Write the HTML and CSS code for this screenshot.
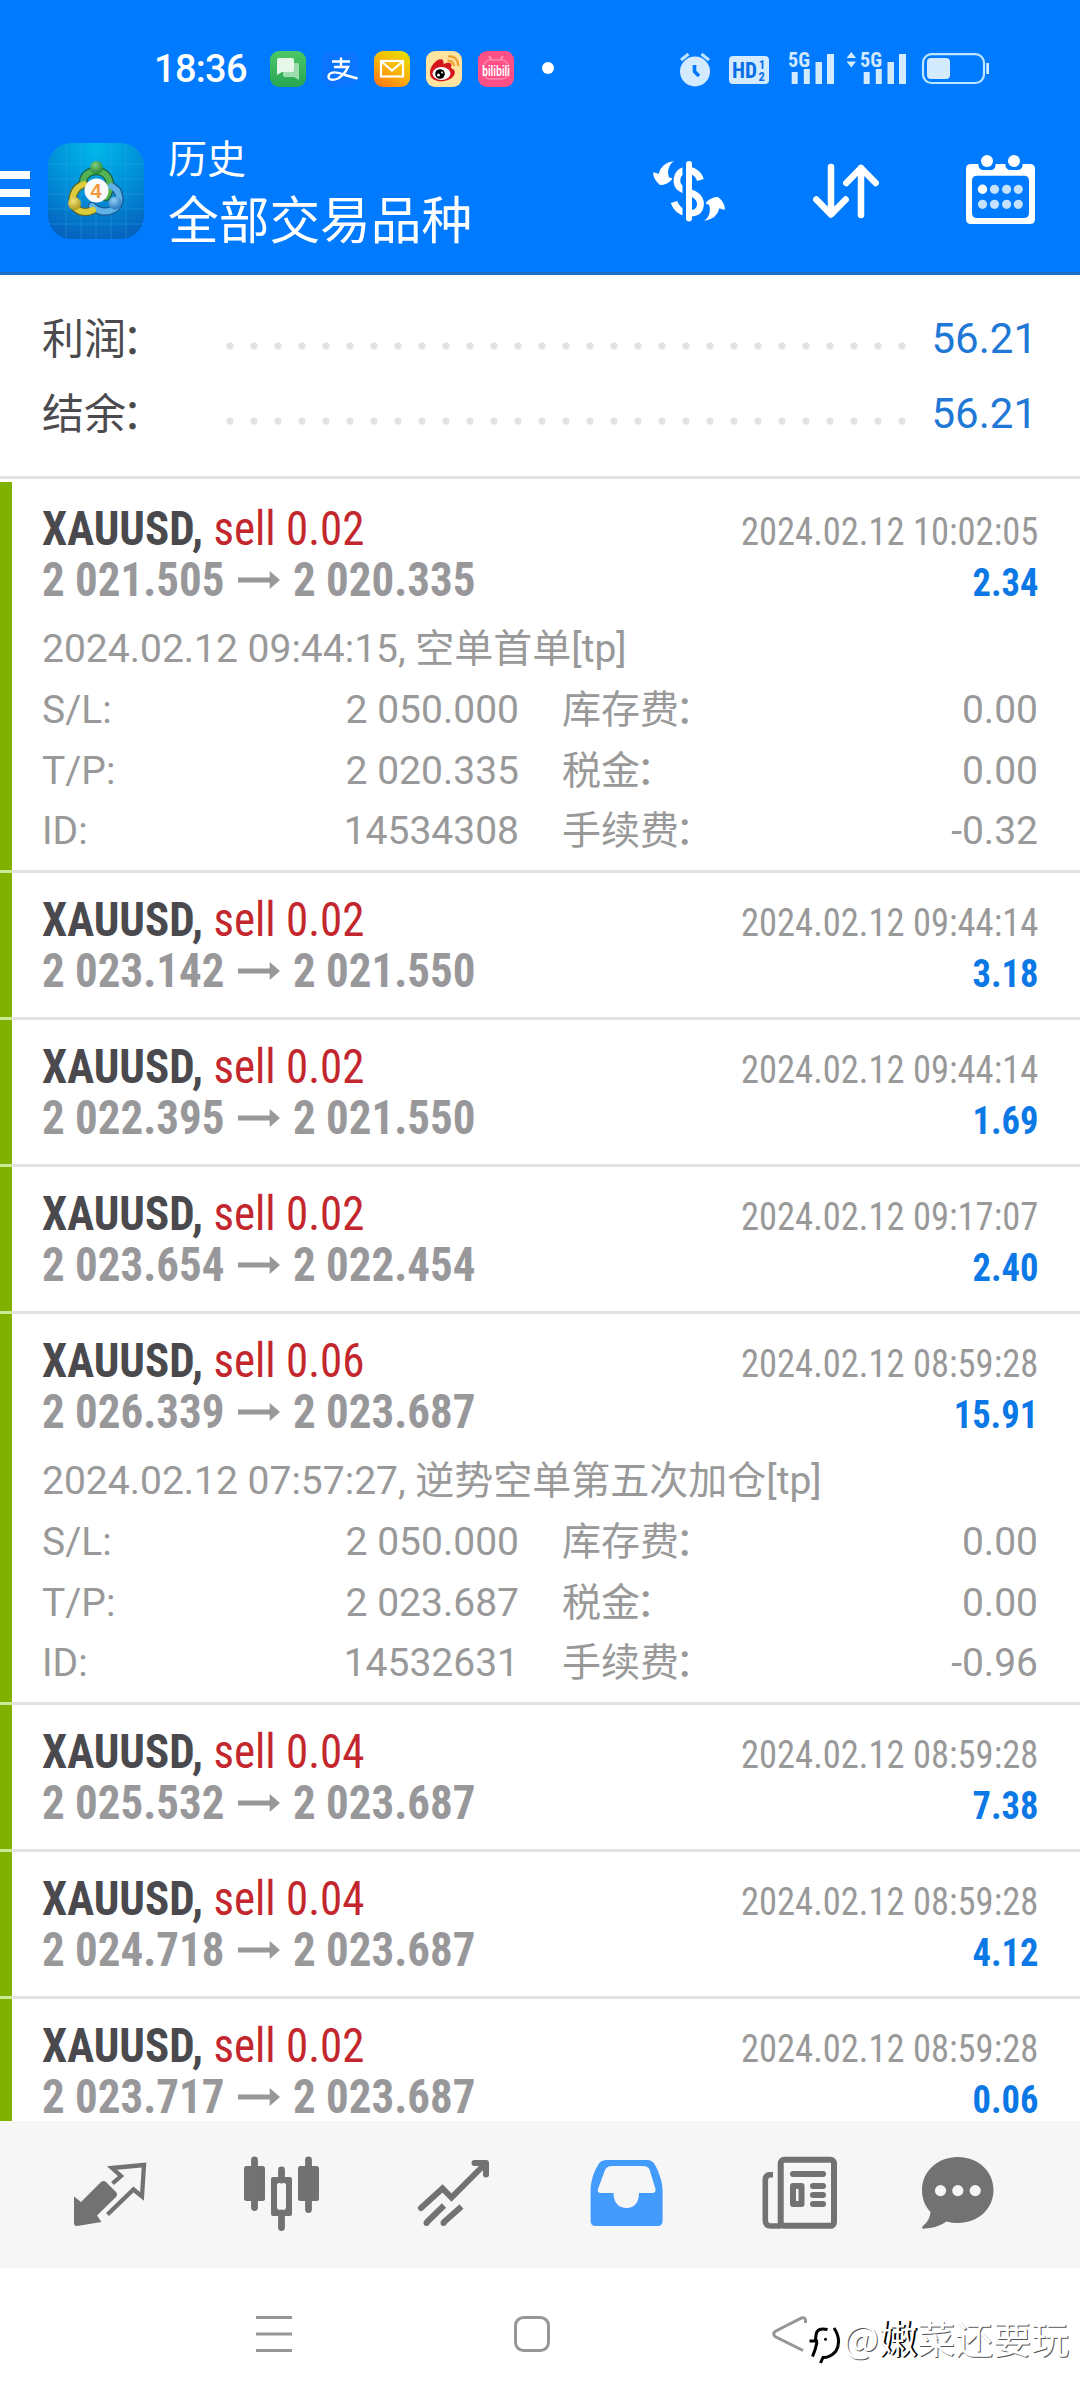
FILE: index.html
```html
<!DOCTYPE html>
<html lang="zh-CN">
<head>
<meta charset="utf-8">
<title>历史</title>
<link rel="stylesheet" href="styles.css">
</head>
<body>
<svg class="defs" aria-hidden="true">
  <symbol id="arrow" viewBox="0 0 45 18" preserveAspectRatio="none"><path d="M0 6.500H34V0L45 9L34 18V11.500H0Z"/></symbol>
</svg>
<header class="header">
  <div class="status">
    <span class="time">18:36</span>
    <div class="apps">
      <svg width="36" height="38" viewBox="270 50 36 38">
        <defs><linearGradient id="gGreen" x1="0" y1="0" x2="0" y2="1"><stop offset="0" stop-color="#4cc866"/><stop offset="1" stop-color="#28a552"/></linearGradient></defs>
        <rect x="270" y="51" width="36" height="36" rx="9" fill="url(#gGreen)"/>
        <path d="M287 63H297.500Q299 63 299 64.500V80L294 77H285Q283 77 283 75V63Z" fill="#9ddcae"/>
        <path d="M279 58H292Q294 58 294 60V70Q294 72 292 72H282L277 75V60Q277 58 279 58Z" fill="#e6f7ea"/>
      </svg>
      <svg width="36" height="38" viewBox="322 50 36 38">
        <rect x="322" y="51" width="36" height="36" rx="9" fill="#0b75ff"/>
        <path d="M341 57.500V67M332 61.500H350M334 67H348Q345 74 338 78.500Q331.500 81 329 78.500Q327.500 75 331 73Q336 71 345 75L357.500 78.500" fill="none" stroke="#fff" stroke-width="2.400"/>
      </svg>
      <svg width="36" height="38" viewBox="374 50 36 38">
        <defs><linearGradient id="gMail" x1=".8" y1="0" x2=".2" y2="1"><stop offset="0" stop-color="#e6dc00"/><stop offset=".5" stop-color="#f9b50a"/><stop offset="1" stop-color="#ff7a10"/></linearGradient></defs>
        <rect x="374" y="51" width="36" height="36" rx="9" fill="url(#gMail)"/>
        <rect x="381" y="61" width="22" height="15.500" fill="none" stroke="#fff" stroke-width="2.200"/>
        <path d="M382 62L392 70.500L402 62" fill="none" stroke="#fff" stroke-width="2.200"/>
      </svg>
      <svg width="36" height="38" viewBox="426 50 36 38">
        <rect x="426" y="51" width="36" height="36" rx="9" fill="#ffe3a0"/>
        <path d="M430 73C430 66 437 58 442 59.500Q444 60.500 443.500 64Q451 61 451.500 65L451 68Q456 70 454.500 74C452.500 80 444 82 438 81C433 80 430 77.500 430 73Z" fill="#d5151c"/>
        <ellipse cx="441.500" cy="73.500" rx="9" ry="6.500" fill="#fff"/>
        <circle cx="440" cy="74" r="4.800" fill="#000"/><circle cx="438.500" cy="75" r="1.500" fill="#fff"/><circle cx="442" cy="72.500" r=".9" fill="#fff"/>
        <path d="M448 56.500Q457 55 458.500 66M447.500 61Q453 60.500 454 66" fill="none" stroke="#f0a02c" stroke-width="2.200"/>
      </svg>
      <svg width="36" height="38" viewBox="478 50 36 38">
        <rect x="478" y="51" width="36" height="36" rx="9" fill="#ff4f87"/>
        <path d="M489 56L492 60M503 56L500 60" stroke="#ff97b8" stroke-width="2"/>
        <rect x="484" y="60" width="24" height="19" rx="6" fill="none" stroke="#ff86ad" stroke-width="1.500"/>
        <text x="482" y="75.500" textLength="28" lengthAdjust="spacingAndGlyphs" class="bili">bilibili</text>
      </svg>
      <svg class="more" width="12" height="38" viewBox="542 50 12 38"><circle cx="548" cy="68" r="6" fill="#fff"/></svg>
    </div>
    <div class="system">
      <svg width="32" height="38" viewBox="679 50 32 38">
        <circle cx="695" cy="71.500" r="15"/>
        <path d="M681 60L688.500 54M709 60L701.500 54" class="line" stroke-width="3"/>
        <path d="M694.500 65V71.500L699 76" fill="none" stroke="#007aff" stroke-width="3.600"/>
      </svg>
      <svg class="hd" width="40" height="38" viewBox="729 50 40 38">
        <rect x="729" y="56" width="40" height="28" rx="4"/>
        <g class="cut"><text x="732" y="78" font-size="22" textLength="25" lengthAdjust="spacingAndGlyphs">HD</text><text x="759" y="69" font-size="12">1</text><text x="758.500" y="81" font-size="12.500">2</text></g>
      </svg>
      <svg class="sim" width="47" height="38" viewBox="788 50 47 38">
        <text x="788" y="66.500" font-size="20.500" textLength="22" lengthAdjust="spacingAndGlyphs">5G</text>
        <path d="M791.700 72h6v12h-6zM803.800 69h6v15h-6zM815.500 62h6.500v22h-6.500zM827 54h7v30h-7z"/>
      </svg>
      <svg class="sim2" width="61" height="38" viewBox="846 50 61 38">
        <text x="860" y="66.500" font-size="20.500" textLength="22" lengthAdjust="spacingAndGlyphs">5G</text>
        <path d="M846.500 58L851.300 52L856 58zM846.500 61.500L851.300 67.500L856 61.500zM863.700 72h6v12h-6zM875.800 69h6v15h-6zM887.500 62h6.500v22h-6.500zM899 54h7v30h-7z"/>
      </svg>
      <svg class="battery" width="67" height="38" viewBox="922 50 67 38">
        <rect x="923" y="54.200" width="61" height="28.800" rx="8.500" class="line" stroke-width="2.200"/>
        <rect x="927" y="58" width="23" height="21" rx="4"/>
        <rect x="986.300" y="63" width="2.700" height="11"/>
      </svg>
    </div>
  </div>
  <div class="appbar">
    <div class="burger"><i></i><i></i><i></i></div>
    <svg class="logo" width="96" height="96" viewBox="48 143 96 96">
      <defs>
        <radialGradient id="gBg" cx=".5" cy=".05" r="1"><stop offset="0" stop-color="#00b7ea"/><stop offset=".5" stop-color="#008fd8"/><stop offset="1" stop-color="#0660bd"/></radialGradient>
        <radialGradient id="hG" cx=".4" cy=".3" r=".8"><stop offset="0" stop-color="#7fd07e"/><stop offset="1" stop-color="#177a2a"/></radialGradient>
        <radialGradient id="hY" cx=".4" cy=".3" r=".8"><stop offset="0" stop-color="#f3e878"/><stop offset="1" stop-color="#a38a12"/></radialGradient>
        <radialGradient id="hB" cx=".4" cy=".3" r=".8"><stop offset="0" stop-color="#8fcdf6"/><stop offset="1" stop-color="#1d6cb8"/></radialGradient>
      </defs>
      <rect x="48" y="143" width="96" height="96" rx="23" fill="url(#gBg)"/>
      <path d="M66 144V238M81 143V239M96 143V239M111 143V239M126 144V238M48 164H144M48 179H144M48 194H144M48 209H144M48 224H144" stroke="#35b5e8" stroke-opacity=".3" fill="none"/>
      <g fill="none" stroke-linecap="round">
        <path d="M83 182C84 168 108 166 110 184Q110 192 106 197" stroke="#1c6240" stroke-width="8.500"/>
        <path d="M111 186C121 190 122 205 114 209C106 214 97 211 92 206" stroke="#1a5a92" stroke-width="8.500"/>
        <path d="M84 184C73 188 70 200 75 207C80 213 87 213 93 210" stroke="#5f6a28" stroke-width="8.500"/>
        <path d="M83 182C84 168 108 166 110 184Q110 192 106 197" stroke="#52b254" stroke-width="6"/>
        <path d="M111 186C121 190 122 205 114 209C106 214 97 211 92 206" stroke="#5fb2e8" stroke-width="6"/>
        <path d="M84 184C73 188 70 200 75 207C80 213 87 213 93 210" stroke="#dccb3a" stroke-width="6"/>
      </g>
      <circle cx="96.500" cy="167.500" r="6.500" fill="url(#hG)"/><circle cx="74.500" cy="203.500" r="6.500" fill="url(#hY)"/><circle cx="115" cy="203" r="6.500" fill="url(#hB)"/>
      <circle cx="96.500" cy="190.500" r="12" fill="#fafafa"/>
      <text x="96" y="197.500" text-anchor="middle" class="four">4</text>
    </svg>
    <div class="titles"><h1>历史</h1><h2>全部交易品种</h2></div>
    <div class="actions">
      <svg width="74" height="96" viewBox="653 143 74 96">
        <path d="M701.500 180C699 172 691 168.500 685 170.500C677 173 675.500 184 682 188.500C689 193 701 193 701.500 204C701 213.500 694 213.500 688 213C681 212 677 208 675 202" fill="none" stroke="#fff" stroke-width="6.800"/>
        <path d="M685.500 163V219" stroke="#007aff" stroke-width="4"/>
        <path d="M690 164V218.500" stroke="#fff" stroke-width="6" stroke-linecap="round"/>
        <g id="swap"><path d="M675 161C669.500 165 668 171 670 177.500Q673.500 177.500 673 179.500Q668 185 661 185Q654.500 180 654 172.500Q657 172 659.500 174Q662 163 675 161Z" fill="#fff"/></g>
        <use href="#swap" transform="rotate(180 690 191)"/>
      </svg>
      <svg width="66" height="96" viewBox="813 143 66 96"><path d="M831 167V214M816.300 199.500L831 214.500L845.700 199.500M861 215V168M846.300 183L861 168L875.700 183" fill="none" stroke="#fff" stroke-width="6.500" stroke-linecap="round" stroke-linejoin="round"/></svg>
      <svg width="70" height="96" viewBox="966 143 70 96">
        <path fill-rule="evenodd" d="M971 164H1030Q1035 164 1035 169V219Q1035 224 1030 224H971Q966 224 966 219V169Q966 164 971 164ZM977 175.700Q972 175.700 972 181V213Q972 218 977 218H1024Q1029 218 1029 213V181Q1029 175.700 1024 175.700Z" fill="#fff"/>
        <path d="M978.500 161h17v5q-1 4-5 4h-7q-4 0-5-4zM1005.500 161h17v5q-1 4-5 4h-7q-4 0-5-4z" fill="#007aff"/>
        <circle cx="987" cy="161" r="6" fill="#fff"/><circle cx="1014" cy="161" r="6" fill="#fff"/>
        <circle cx="982.500" cy="189.300" r="4.700" fill="#fff"/>
        <g fill="#c4e2fd"><circle cx="994.500" cy="189.300" r="4.600"/><circle cx="1006.600" cy="189.300" r="4.600"/><circle cx="1018.300" cy="189.300" r="4.600"/><circle cx="982.500" cy="204.300" r="4.600"/><circle cx="994.500" cy="204.300" r="4.600"/><circle cx="1006.600" cy="204.300" r="4.600"/><circle cx="1018.300" cy="204.300" r="4.600"/></g>
      </svg>
    </div>
  </div>
</header>
<section class="summary">
  <div class="total"><span class="name">利润<i>：</i></span><span class="dots"></span><span class="sum">56.21</span></div>
  <div class="total"><span class="name">结余<i>：</i></span><span class="dots"></span><span class="sum">56.21</span></div>
</section>
<main class="deals">
  <article class="deal">
    <div class="row"><span class="symbol">XAUUSD, <b>sell 0.02</b></span><time>2024.02.12 10:02:05</time></div>
    <div class="row"><span class="prices">2 021.505<svg><use href="#arrow"/></svg>2 020.335</span><span class="profit">2.34</span></div>
    <div class="details">
      <p class="comment">2024.02.12 09:44:15, 空单首单[tp]</p>
      <dl><dt>S/L:</dt><dd>2 050.000</dd><dt>库存费<i>：</i></dt><dd>0.00</dd><dt>T/P:</dt><dd>2 020.335</dd><dt>税金<i>：</i></dt><dd>0.00</dd><dt>ID:</dt><dd>14534308</dd><dt>手续费<i>：</i></dt><dd>-0.32</dd></dl>
    </div>
  </article>
  <article class="deal">
    <div class="row"><span class="symbol">XAUUSD, <b>sell 0.02</b></span><time>2024.02.12 09:44:14</time></div>
    <div class="row"><span class="prices">2 023.142<svg><use href="#arrow"/></svg>2 021.550</span><span class="profit">3.18</span></div>
  </article>
  <article class="deal">
    <div class="row"><span class="symbol">XAUUSD, <b>sell 0.02</b></span><time>2024.02.12 09:44:14</time></div>
    <div class="row"><span class="prices">2 022.395<svg><use href="#arrow"/></svg>2 021.550</span><span class="profit">1.69</span></div>
  </article>
  <article class="deal">
    <div class="row"><span class="symbol">XAUUSD, <b>sell 0.02</b></span><time>2024.02.12 09:17:07</time></div>
    <div class="row"><span class="prices">2 023.654<svg><use href="#arrow"/></svg>2 022.454</span><span class="profit">2.40</span></div>
  </article>
  <article class="deal">
    <div class="row"><span class="symbol">XAUUSD, <b>sell 0.06</b></span><time>2024.02.12 08:59:28</time></div>
    <div class="row"><span class="prices">2 026.339<svg><use href="#arrow"/></svg>2 023.687</span><span class="profit">15.91</span></div>
    <div class="details">
      <p class="comment">2024.02.12 07:57:27, 逆势空单第五次加仓[tp]</p>
      <dl><dt>S/L:</dt><dd>2 050.000</dd><dt>库存费<i>：</i></dt><dd>0.00</dd><dt>T/P:</dt><dd>2 023.687</dd><dt>税金<i>：</i></dt><dd>0.00</dd><dt>ID:</dt><dd>14532631</dd><dt>手续费<i>：</i></dt><dd>-0.96</dd></dl>
    </div>
  </article>
  <article class="deal">
    <div class="row"><span class="symbol">XAUUSD, <b>sell 0.04</b></span><time>2024.02.12 08:59:28</time></div>
    <div class="row"><span class="prices">2 025.532<svg><use href="#arrow"/></svg>2 023.687</span><span class="profit">7.38</span></div>
  </article>
  <article class="deal">
    <div class="row"><span class="symbol">XAUUSD, <b>sell 0.04</b></span><time>2024.02.12 08:59:28</time></div>
    <div class="row"><span class="prices">2 024.718<svg><use href="#arrow"/></svg>2 023.687</span><span class="profit">4.12</span></div>
  </article>
  <article class="deal">
    <div class="row"><span class="symbol">XAUUSD, <b>sell 0.02</b></span><time>2024.02.12 08:59:28</time></div>
    <div class="row"><span class="prices">2 023.717<svg><use href="#arrow"/></svg>2 023.687</span><span class="profit">0.06</span></div>
  </article>
</main>
<nav class="tabs">
  <svg viewBox="0 2121 195 147">
    <path d="M74 2196.500L81 2202L101 2182Q103.500 2180 106 2182L116 2192Q118 2194.500 116 2197L97 2215.500L101.500 2222L77 2226Q74 2226 74 2223Z"/>
    <path d="M112.500 2183.500L121 2176L112 2168L144 2165L142 2196.500L133.500 2189.500L107.500 2214.500" class="stroke" stroke-width="4.300"/>
  </svg>
  <svg viewBox="195 2121 172 147">
    <rect x="244" y="2166" width="21" height="35" rx="2.500"/><rect x="298" y="2166" width="21" height="35" rx="2.500"/>
    <path d="M254.500 2160V2207.500M308.500 2160V2209.500M281.500 2170V2180M281.500 2213V2227.500" class="stroke round" stroke-width="6.800"/>
    <path fill-rule="evenodd" d="M273 2177H290Q292 2177 292 2179V2214Q292 2216 290 2216H273Q271 2216 271 2214V2179Q271 2177 273 2177ZM280 2182.700Q277 2182.700 277 2185.500V2207Q277 2210 280 2210H283Q286 2210 286 2207V2185.500Q286 2182.700 283 2182.700Z"/>
  </svg>
  <svg viewBox="367 2121 173 147">
    <path d="M421 2208L442.500 2188.500L451.500 2197.500L484 2165" class="stroke" stroke-width="6" stroke-linecap="round"/>
    <path d="M474.500 2163H486V2174.500" class="stroke round" stroke-width="6"/>
    <path d="M426.500 2222.500L444 2205.500M443.500 2222.500L461.500 2206.500" class="stroke" stroke-width="6"/><circle cx="426.500" cy="2223" r="3"/><circle cx="443.500" cy="2223" r="3"/>
  </svg>
  <svg class="active" viewBox="540 2121 173 147">
    <path fill-rule="evenodd" d="M607 2160H647Q652 2160 654.500 2164C659 2172 662.600 2182 662.600 2191V2221Q662.600 2226 657.600 2226H595.600Q590.600 2226 590.600 2221V2191C590.600 2181 594 2171 599 2163.500Q601 2160 607 2160ZM612 2166Q607 2166 605 2170L598 2189Q597 2193 601 2193H613.500C613.500 2203 619 2208 626.500 2208C634 2208 639 2203 639 2193H652Q656 2193 655.500 2189L649.500 2169.500Q648 2166 643 2166Z"/>
  </svg>
  <svg viewBox="713 2121 173 147">
    <rect x="780.700" y="2159.800" width="53.300" height="66" rx="3.500" class="stroke" stroke-width="6"/>
    <path d="M773 2174.800H770Q765.300 2175 765.300 2180V2220.500Q765.500 2226 771 2226H781" class="stroke" stroke-width="5.600"/>
    <path d="M793 2174H823M813 2186H823M813 2195H823M813 2204H823" class="stroke round" stroke-width="6"/>
    <rect x="793" y="2186" width="8.500" height="18" class="stroke round" stroke-width="6"/>
  </svg>
  <svg viewBox="886 2121 194 147">
    <path d="M957.700 2157C978 2157 993.500 2171 993.500 2190C993.500 2209 978 2223 957.700 2223Q952 2223 946.500 2221.500Q938 2228 923 2228.800Q921 2228 923 2226Q930 2220 930.500 2212C925 2206 922 2199 922 2190C922 2171 938 2157 957.700 2157Z"/>
    <g fill="#f6f6f6"><circle cx="940.500" cy="2190.600" r="5.600"/><circle cx="957.800" cy="2190.600" r="5.600"/><circle cx="975.200" cy="2190.600" r="5.600"/></g>
  </svg>
</nav>
<footer class="system-nav">
  <svg width="36" height="40" viewBox="256 2314 36 40"><path d="M256 2317.500H292M256 2334H292M256 2350.500H292"/></svg>
  <svg width="38" height="40" viewBox="513 2314 38 40"><rect x="515.500" y="2317.500" width="33" height="33" rx="8"/></svg>
  <svg width="36" height="40" viewBox="771 2314 36 40"><path d="M805.500 2323V2320Q805 2317 801.500 2318L775 2331.500Q772.500 2334 775 2336.500L803 2350.500"/></svg>
</footer>
<div class="watermark">
  <svg width="34" height="42" viewBox="808 2324 34 42"><path d="M827.500 2329.500Q817 2327 816 2335L815.500 2340M809.500 2341H818M817 2342Q815.500 2350 812.500 2356.500M834 2328Q842 2340 836 2351Q830 2358 823 2357.500L820.500 2363"/><circle cx="825.500" cy="2339.300" r="1.500"/></svg>
  <span>@<b>嫩</b>菜还要玩</span>
</div>
</body>
</html>
```
FILE: styles.css
```css
* { box-sizing: border-box; margin: 0; padding: 0; }
body {
  width: 1080px;
  height: 2400px;
  overflow: hidden;
  position: relative;
  background: #fff;
  font-family: Roboto, "Noto Sans CJK SC", sans-serif;
  color: #999;
}
svg { display: block; flex: none; }
.defs { width: 0; height: 0; position: absolute; }

/* Header */
.header { height: 275px; background: #007aff; border-bottom: 3px solid #1a6cc4; color: #fff; }
.status { display: flex; height: 137px; padding: 50px 91px 0 154px; align-items: flex-start; }
.time { width: 116px; font-size: 38px; font-weight: 500; line-height: 38px; letter-spacing: -0.7px; }
.apps { display: flex; gap: 16px; }
.more { margin-left: 12px; }
.bili { font: 700 15px "Liberation Sans", sans-serif; fill: #fff; }
.system { display: flex; margin-left: auto; fill: #d3eaff; }
.system text { font-family: "Roboto Condensed", Roboto, sans-serif; font-weight: 700; }
.system .line { fill: none; stroke: #bfe6ff; }
.system .cut { fill: #0a6fe6; }
.system svg { overflow: visible; }
.hd { margin-left: 18px; }
.sim { margin-left: 19px; }
.sim2 { margin-left: 11px; }
.battery { margin-left: 15px; }
.appbar { display: flex; align-items: flex-start; padding-right: 44px; }
.burger { display: flex; flex-direction: column; gap: 10px; width: 30px; margin-top: 34px; }
.burger i { height: 8px; background: #fff; }
.logo { margin: 6px 24px 0 18px; }
.titles { display: flex; flex-direction: column; gap: 11px; }
.titles h1, .titles h2 { font-family: "Noto Sans CJK SC", sans-serif; font-weight: 400; white-space: nowrap; }
.titles h1 { font-size: 39px; line-height: 39px; }
.titles h2 { font-size: 50.7px; line-height: 60px; }
.actions { display: flex; gap: 87px; margin: 6px 0 0 auto; }
.four { font: 700 20px "Liberation Sans", sans-serif; fill: #f29a3e; }

/* Totals */
.summary { height: 204px; padding: 26px 43px 0 42px; border-bottom: 3px solid #e3e3e3; }
.total { display: flex; align-items: center; height: 75px; font-size: 42px; line-height: 75px; }
.name { width: 176px; color: #4b4b4f; white-space: nowrap; padding-top: 2px; }
.name i, .details i { font-style: normal; margin-left: -4px; }
.dots {
  width: 696px;
  height: 8px;
  margin-top: 15px;
  background: radial-gradient(circle at 12px 4px, #e2e2e2 3.2px, transparent 4px) 0 0 / 24px 8px;
}
.sum { margin-left: auto; color: #1f78d6; }

/* Deals */
.deals { height: 1642px; padding-top: 3px; overflow: hidden; }
.deal { border-left: 12px solid #80b000; padding: 21px 42px 0 30px; height: 144px; }
.deal:has(.details) { height: 388px; }
.deal + .deal { margin-top: 3px; position: relative; }
.deal + .deal::before {
  content: "";
  position: absolute;
  left: -12px;
  right: 0;
  top: -3px;
  height: 3px;
  background: linear-gradient(90deg, #cdea98 12px, #e3e3e3 12px);
}
.row {
  display: flex;
  justify-content: space-between;
  align-items: baseline;
  height: 51px;
  line-height: 51px;
  white-space: nowrap;
  font-family: "Roboto Condensed", Roboto, sans-serif;
}
.row > * { transform: scaleX(0.937); transform-origin: 0 50%; }
.row > :last-child { transform-origin: 100% 50%; }
.symbol { font-size: 48px; font-weight: 700; color: #4a494e; }
.symbol b { font-weight: 400; color: #c3262c; }
.prices { font-size: 48px; font-weight: 700; color: #98989b; }
.prices svg { display: inline-block; width: 45px; height: 18px; margin: 0 14px 7px; fill: #98989b; }
time { font-size: 39px; }
.profit { font-size: 39px; font-weight: 700; color: #0b78e6; }
.details { padding-top: 14px; font-size: 39px; line-height: 61px; white-space: nowrap; }
.details dl { display: grid; grid-template-columns: 100px 377px 190px 1fr; grid-template-rows: 61px 61px 60px; }
.details dt:nth-of-type(odd) + dd + dt { padding-left: 43px; }
.details dd { text-align: right; }
.details dd:nth-last-of-type(-n+2), .details dt:nth-last-of-type(-n+2) { line-height: 59px; }

/* Tabs */
.tabs { display: grid; grid-template-columns: 195px 172px 173px 173px 173px 194px; height: 147px; background: #f6f6f6; fill: #727272; }
.tabs svg { width: 100%; height: 147px; }
.stroke { fill: none; stroke: #727272; }
.round { stroke-linecap: round; stroke-linejoin: round; }
.tabs .active { fill: #439cfb; }

.system-nav { display: flex; justify-content: space-between; padding: 46px 273px 0 256px; fill: none; stroke: #969696; stroke-width: 3px; }

.watermark { position: absolute; left: 808px; top: 2314px; display: flex; align-items: flex-start; gap: 1px; }
.watermark svg { margin-top: 10px; fill: #000; }
.watermark path { fill: none; stroke: #000; stroke-width: 3px; }
.watermark span { font: 400 38px/46px "Noto Sans CJK SC", sans-serif; color: #fff; text-shadow: 1px 1px 0 #555; white-space: nowrap; }
.watermark b { font-weight: 400; text-shadow: 2px 0 0 #000, 1px 1px 0 #000; }
```
